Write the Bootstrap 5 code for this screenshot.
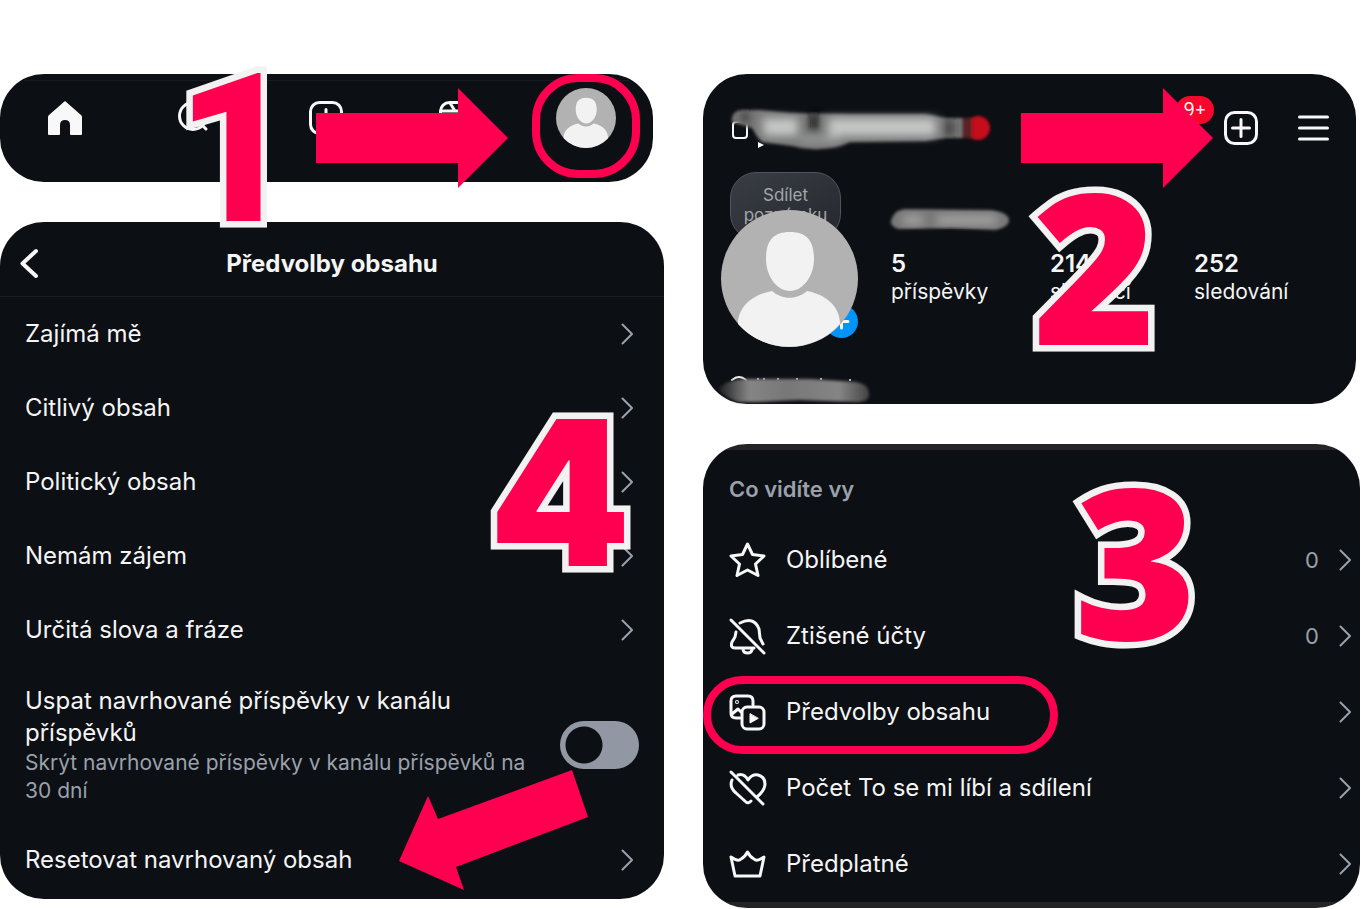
<!DOCTYPE html>
<html lang="cs">
<head>
<meta charset="utf-8">
<meta name="viewport" content="width=device-width, initial-scale=1">
<title>Předvolby obsahu</title>
<link href="https://cdn.jsdelivr.net/npm/bootstrap@5.3.0/dist/css/bootstrap.min.css" rel="stylesheet">
<style>
  :root { --ink: #0c0f14; --hot: #ff0050; --muted: #9aa1ab; --paper: #f2f2f2; }
  body { background: #fff; color: #f5f5f5; font-family: Inter, "Liberation Sans", sans-serif; }
  .board { display: grid; grid-template-columns: 664fr 657fr; column-gap: 39px; padding: 74px 1px 0 0; }
  .stack { display: flex; flex-direction: column; gap: 40px; min-width: 0; }
  .panel { position: relative; background: var(--ink); border-radius: 44px; }
  .inset { margin-right: 11px; }
  .inset-sm { margin-right: 4px; }
  .plain { background: none; border: 0; padding: 0; color: inherit; line-height: 0; }
  a { color: inherit; text-decoration: none; }
  svg { display: block; flex: none; overflow: visible; }
  .ico { fill: none; stroke: #f8f8f8; stroke-width: 3; stroke-linecap: round; stroke-linejoin: round; }
  .chev { fill: none; stroke: var(--muted); stroke-width: 2; stroke-linecap: round; stroke-linejoin: round; }

  .tabs { padding: 0 2px 20px 0; height: 108px; }
  .tabs a { flex: 1 1 0; display: flex; justify-content: center; align-items: center; }
  .tabs::before { content: ""; position: absolute; top: 6px; left: 24px; right: 24px; border-top: 1px solid #171a20; }

  .title-bar { height: 75px; border-bottom: 1px solid #1b1e24; padding: 9px 20px 0; }
  .title-bar h1 { font-size: 24px; line-height: 32px; font-weight: 700; }
  .side { width: 20px; }
  .item { display: flex; align-items: center; height: 74px; padding: 0 31px 0 25px; font-size: 24px; line-height: 32px; }
  .item-tall { height: 156px; padding-right: 25px; }
  .hint { font-size: 21px; line-height: 28px; color: var(--muted); }
  .toggle { appearance: none; flex: none; width: 79px; height: 48px; margin: 0; border-radius: 24px; background: radial-gradient(circle at 24px 24px, var(--ink) 18px, #9298a3 19px); }
  .copy { width: 504px; }
  .copy > span:first-child { max-width: 440px; }
  .foot { padding-bottom: 2px; }

  .account { height: 98px; padding: 10px 27px 0; }
  .account .tools { gap: 40px; }
  .profile { padding-left: 18px; gap: 33px; height: 175px; }
  .who { position: relative; width: 137px; flex: none; }
  .note { width: 111px; height: 68px; margin-left: 9px; padding-top: 12px; border-radius: 26px; background: linear-gradient(150deg, #3a3d43, #24272d); border: 1px solid #50545b; font-size: 17px; line-height: 20px; color: #a2a6ad; text-align: center; }
  .face { position: absolute; left: 0; top: 38px; }
  .add { position: absolute; left: 104px; top: 133px; }
  .stats { display: grid; grid-template-columns: 159px 144px 1fr; font-size: 21px; line-height: 24px; }
  .stats dt { font-size: 24px; line-height: 32px; font-weight: 600; }
  .stats dd { margin: 0; }
  .about { padding-top: 36px; flex: 1; }
  .handle { height: 57px; padding: 28px 0 0 15px; }
  .count { position: absolute; right: 142px; top: 22px; width: 38px; height: 28px; border-radius: 14px; background: #f8062b; font-size: 18px; line-height: 28px; }

  .menu { padding: 6px 0; overflow: hidden; background: linear-gradient(#232328 6px, var(--ink) 6px calc(100% - 6px), #232328 calc(100% - 6px)); }
  .menu h2 { font-size: 22px; line-height: 32px; font-weight: 600; color: var(--muted); height: 72px; padding: 23px 26px 0; margin: 0; }
  .menu .item { height: 76px; padding: 0 9px 0 26px; gap: 20px; }
  .menu .value { font-size: 22px; color: var(--muted); }

  .over { position: absolute; z-index: 2; pointer-events: none; }
  .ring { position: absolute; border: 8px solid var(--hot); pointer-events: none; }
  .step { position: absolute; z-index: 3; font-weight: 900; font-size: 202px; line-height: 202px; color: var(--hot); -webkit-text-stroke: 13px var(--paper); paint-order: stroke fill; pointer-events: none; }
  .step-slim { font-family: Roboto, sans-serif; font-size: 207px; line-height: 207px; }
  .step-round { font-family: "Open Sans", sans-serif; font-size: 210px; line-height: 210px; }
</style>
</head>
<body>
<svg width="0" height="0" class="position-absolute" aria-hidden="true">
  <defs>
    <symbol id="chev" viewBox="0 0 12 22"><path class="chev" d="M1.500 1.500 11 11 1.500 20.500"/></symbol>
    <symbol id="person" viewBox="0 0 137 137">
      <circle cx="68.500" cy="68.500" r="68.500" fill="#b2b2b2"/>
      <path fill="#f2f2f2" d="M69 22c17 0 24 9 24 27 0 17-11 32-24 32S45 66 45 49c0-18 7-27 24-27zM51 81c10 9 25 9 35 0 21 4 33 17 33 33a68.500 68.500 0 0 1-102 0c0-16 13-29 34-33z"/>
    </symbol>
    <symbol id="plus" viewBox="0 0 34 34"><g class="ico"><rect x="1.500" y="1.500" width="31" height="31" rx="9"/><path d="M17 8.500v17M8.500 17h17"/></g></symbol>
    <symbol id="arrow" viewBox="0 0 192 100"><path fill="#ff0050" d="M0 25h142V0l50 50-50 50V75H0z"/></symbol>
    <filter id="soft" x="-20%" y="-40%" width="140%" height="180%"><feGaussianBlur stdDeviation="1.500"/></filter>
    <filter id="haze" x="-40%" y="-60%" width="180%" height="220%"><feGaussianBlur stdDeviation="5"/></filter>
    <linearGradient id="smear"><stop offset="0" stop-color="#222"/><stop offset=".2" stop-color="#858585"/><stop offset=".45" stop-color="#777"/><stop offset=".8" stop-color="#858585"/><stop offset="1" stop-color="#444"/></linearGradient>
  </defs>
</svg>

<main class="board">
  <div class="stack">
    <nav class="panel inset tabs d-flex" aria-label="Hlavní">
      <a href="#" aria-label="Domů"><svg width="34" height="34" viewBox="0 0 34 34"><path fill="#f8f8f8" d="M17 0 33 14q1 1 1 2v17q0 1-1 1H23q-1 0-1-1v-9q0-5-5-5t-5 5v9q0 1-1 1H1q-1 0-1-1V16q0-1 1-2z"/></svg></a>
      <a href="#" aria-label="Hledat"><svg class="ico" width="34" height="34" viewBox="0 0 34 34"><circle cx="15" cy="15" r="13.500"/><path d="m25 25 3 3"/></svg></a>
      <a href="#" aria-label="Přidat"><svg width="34" height="34"><use href="#plus"/></svg></a>
      <a href="#" aria-label="Reels"><svg class="ico" width="34" height="34" viewBox="0 0 34 34"><rect x="1.500" y="1.500" width="31" height="31" rx="9"/><path d="M1.500 10h31M11 2l5 8M20 2l5 8M14 17v9l8-4.500z"/></svg></a>
      <a href="#" aria-label="Profil"><svg width="60" height="60"><use href="#person"/></svg></a>
      <span class="ring" style="right:13px;top:0;width:108px;height:104px;border-radius:46px"></span>
      <svg class="over" style="left:316px;top:14px" width="192" height="100"><use href="#arrow"/></svg>
      <span class="step step-slim" style="left:176px;top:-27px">1</span>
    </nav>

    <section class="panel foot">
      <header class="title-bar d-flex align-items-center justify-content-between">
        <button class="plain side" aria-label="Zpět"><svg class="ico" style="stroke-width:4" width="18" height="29" viewBox="0 0 18 29"><path d="M16 2 2.500 14.500 16 27"/></svg></button>
        <h1 class="m-0">Předvolby obsahu</h1><span class="side"></span>
      </header>
      <a class="item justify-content-between" href="#">Zajímá mě<svg width="12" height="22"><use href="#chev"/></svg></a>
      <a class="item justify-content-between" href="#">Citlivý obsah<svg width="12" height="22"><use href="#chev"/></svg></a>
      <a class="item justify-content-between" href="#">Politický obsah<svg width="12" height="22"><use href="#chev"/></svg></a>
      <a class="item justify-content-between" href="#">Nemám zájem<svg width="12" height="22"><use href="#chev"/></svg></a>
      <a class="item justify-content-between" href="#">Určitá slova a fráze<svg width="12" height="22"><use href="#chev"/></svg></a>
      <div class="item item-tall justify-content-between">
        <label class="copy" for="snooze"><span class="d-block">Uspat navrhované příspěvky v kanálu příspěvků</span><span class="hint d-block">Skrýt navrhované příspěvky v kanálu příspěvků na 30 dní</span></label>
        <input class="toggle" type="checkbox" role="switch" id="snooze">
      </div>
      <a class="item justify-content-between" href="#">Resetovat navrhovaný obsah<svg width="12" height="22"><use href="#chev"/></svg></a>
      <span class="step" style="left:489px;top:170px">4</span>
      <svg class="over" style="left:399px;top:548px" width="189" height="120" viewBox="0 0 189 120"><path fill="#ff0050" d="M0 91 29 26l10 23L173 0l16 47L57 97l8 23z"/></svg>
    </section>
  </div>

  <div class="stack">
    <section class="panel inset-sm">
      <header class="account d-flex align-items-center justify-content-between">
        <svg width="262" height="48" viewBox="0 0 262 48" role="img" aria-label="Skryté jméno">
          <rect class="ico" style="stroke-width:2" x="3" y="18" width="14" height="16" rx="3"/>
          <path fill="#fff" d="M28 38v6l6-3z"/>
          <g filter="url(#soft)">
            <path fill="#777" d="M2 14Q4 6 12 6L30 6 60 9 120 10 195 10 216 14 236 14V34L216 34 195 37 120 38Q110 43 100 44 80 47 62 42L32 38Q26 32 22 24L2 18z"/>
            <circle cx="248" cy="24" r="12" fill="#c5101c"/>
            <path fill="#5a2227" d="M232 14h10v20h-10z"/>
          </g>
          <g filter="url(#haze)"><path fill="#c4c8c6" d="M32 14h36v18H34zM98 14h108v18H98zM70 34h40v3H70z"/><path fill="#111" d="M80 8h8v20h-8z"/><path fill="#222" d="M12 8h6v10h-6zM216 16h6v16h-6z"/></g>
        </svg>
        <div class="tools d-flex align-items-center">
          <button class="plain" aria-label="Přidat"><svg width="34" height="34"><use href="#plus"/></svg></button>
          <button class="plain" aria-label="Nabídka"><svg class="ico" width="31" height="26" viewBox="0 0 31 26"><path d="M1.500 2h28M1.500 13h28M1.500 24h28"/></svg></button>
        </div>
        <span class="count text-center">9+</span>
      </header>
      <div class="profile d-flex">
        <div class="who">
          <div class="note">Sdílet poznámku</div>
          <svg class="add" width="33" height="33" viewBox="0 0 33 33"><circle cx="16.500" cy="16.500" r="16.500" fill="#0095f6"/><path class="ico" d="M16.500 10v13M10 16.500h13"/></svg>
          <svg class="face" width="137" height="137"><use href="#person"/></svg>
        </div>
        <div class="about">
          <svg width="120" height="24" viewBox="0 0 120 24" role="img" aria-label="Skryté jméno"><path filter="url(#soft)" fill="#777" d="M1 10Q4 2 14 1L100 2Q118 5 118 12T104 22L60 20 8 21Q-3 18 1 10z"/><path filter="url(#haze)" fill="#aaa" d="M12 8h20v8H12zM46 8h60v8H46z"/></svg>
          <dl class="stats mb-0 mt-3">
            <div><dt>5</dt><dd>příspěvky</dd></div>
            <div><dt>214</dt><dd>sledující</dd></div>
            <div><dt>252</dt><dd>sledování</dd></div>
          </dl>
        </div>
      </div>
      <div class="handle">
        <svg width="152" height="29" viewBox="0 0 152 29" role="img" aria-label="Skrytý účet"><path class="ico" style="stroke-width:2" d="M14 5q7-6 14 0M40 4h0M46 4h0M60 4h0M79 4h0M103 4h0M132 5h0"/><path filter="url(#soft)" fill="url(#smear)" d="M2 12Q12 4 28 4L92 4 138 7Q150 9 151 18T138 27L80 25 40 27 20 27Q-2 18 2 12z"/></svg>
      </div>
      <svg class="over" style="left:318px;top:14px" width="192" height="100"><use href="#arrow"/></svg>
      <span class="step step-round" style="left:330px;top:85px">2</span>
    </section>

    <section class="position-relative">
      <div class="panel menu">
        <h2>Co vidíte vy</h2>
        <a class="item" href="#"><svg class="ico" width="37" height="36" viewBox="0 0 37 36"><path d="m18.500 2 5 10.500 11.500 1.500-8.500 8 2.500 11.500-10.500-5.500L8 33.500 10.500 22 2 14l11.500-1.500z"/></svg><span class="flex-fill">Oblíbené</span><span class="value">0</span><svg width="12" height="22"><use href="#chev"/></svg></a>
        <a class="item" href="#"><svg class="ico" width="37" height="36" viewBox="0 0 37 36"><path d="m2 2 33 33M11 5q14-7 19 6l1 9 3 6M7 14 6 19l-3 5q-2 6 3 6h19M14 31q0 4 5 4 3 0 4-3"/></svg><span class="flex-fill">Ztišené účty</span><span class="value">0</span><svg width="12" height="22"><use href="#chev"/></svg></a>
        <a class="item" href="#"><svg class="ico" width="37" height="37" viewBox="0 0 37 37"><path d="M11 24H7q-5 0-5-5V7q0-5 5-5h12q5 0 5 5v4M3 20l6-5 3 3"/><circle cx="8" cy="8" r=".5"/><rect x="13" y="13" width="22" height="22" rx="5"/><path fill="#f8f8f8" stroke-width="1" d="M21 20v9l8-4.500z"/></svg><span class="flex-fill">Předvolby obsahu</span><svg width="12" height="22"><use href="#chev"/></svg></a>
        <a class="item" href="#"><svg class="ico" width="37" height="36" viewBox="0 0 37 36"><path d="m2 2 32 32M9 5q6-2 10 5 4-6 10-5 7 2 7 9 0 6-8 13M3 10q-3 7 4 13l10 9q2 2 5-1"/></svg><span class="flex-fill">Počet To se mi líbí a sdílení</span><svg width="12" height="22"><use href="#chev"/></svg></a>
        <a class="item" href="#"><svg class="ico" width="37" height="28" viewBox="0 0 37 28"><path d="M2 7q7 5 10 2 4-2 6.500-7Q21 7 25 9q3 3 10-2l-4 19H6z"/></svg><span class="flex-fill">Předplatné</span><svg width="12" height="22"><use href="#chev"/></svg></a>
      </div>
      <span class="ring" style="left:0;top:232px;width:355px;height:78px;border-radius:39px"></span>
      <span class="step step-round" style="left:371px;top:10px">3</span>
    </section>
  </div>
</main>
<script src="https://cdn.jsdelivr.net/npm/bootstrap@5.3.0/dist/js/bootstrap.bundle.min.js"></script>
</body>
</html>
